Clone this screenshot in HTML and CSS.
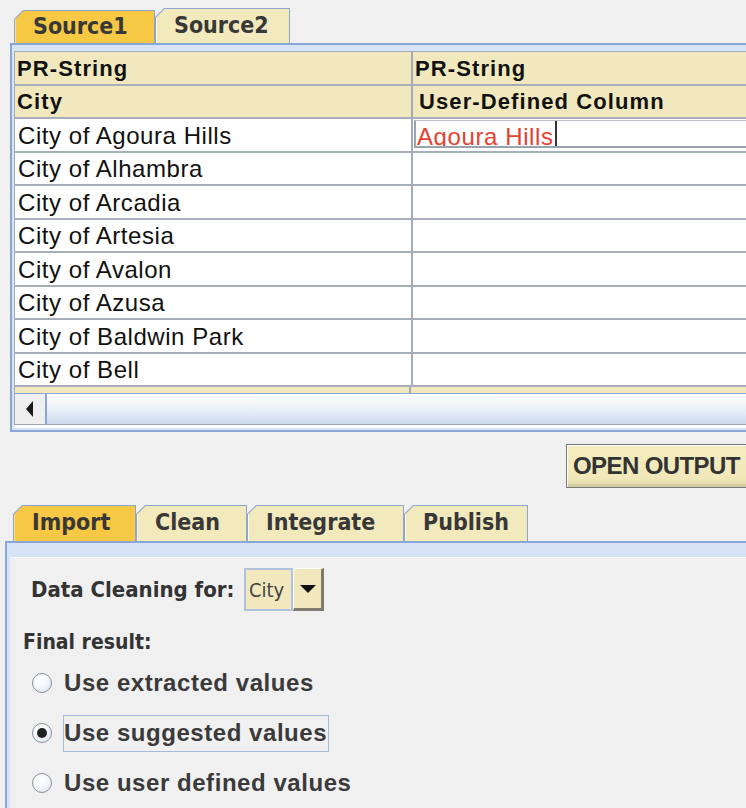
FILE: index.html
```html
<!DOCTYPE html>
<html>
<head>
<meta charset="utf-8">
<link rel="stylesheet" href="styles.css">
</head>
<body>
<div class="top-tabs">
  <div class="tab tab-sel w-src1"><span class="tab-in">Source1</span></div>
  <div class="tab w-src2"><span class="tab-in">Source2</span></div>
</div>
<div class="panel1">
  <div class="grid">
    <div class="hcell">PR-String</div><div class="hcell hcell2">PR-String</div>
    <div class="hcell">City</div><div class="hcell hcell2 indent">User-Defined Column</div>
    <div class="cell">City of Agoura Hills</div><div class="cell cell2 editing"><span class="editor"><span class="edit-text">Agoura Hills</span><span class="caret"></span></span></div>
    <div class="cell">City of Alhambra</div><div class="cell cell2"></div>
    <div class="cell">City of Arcadia</div><div class="cell cell2"></div>
    <div class="cell">City of Artesia</div><div class="cell cell2"></div>
    <div class="cell">City of Avalon</div><div class="cell cell2"></div>
    <div class="cell">City of Azusa</div><div class="cell cell2"></div>
    <div class="cell">City of Baldwin Park</div><div class="cell cell2"></div>
    <div class="cell">City of Bell</div><div class="cell cell2"></div>
  </div>
  <div class="filler"><span class="filler-a"></span><span class="filler-b"></span></div>
  <div class="hscroll">
    <div class="sbtn"><svg width="10" height="16" viewBox="0 0 10 16"><polygon points="8,0 8,16 1,8" fill="#1a1a1a"/></svg></div>
    <div class="track"></div>
  </div>
</div>
<div class="btn-row"><div class="open-btn">OPEN OUTPUT</div></div>
<div class="bottom-tabs">
  <div class="tab tab-sel w-import"><span class="tab-in">Import</span></div>
  <div class="tab w-clean"><span class="tab-in">Clean</span></div>
  <div class="tab w-integrate"><span class="tab-in">Integrate</span></div>
  <div class="tab w-publish"><span class="tab-in">Publish</span></div>
</div>
<div class="panel2">
  <div class="panel2-in">
    <div class="clean-row">
      <span class="lbl">Data Cleaning for:</span>
      <div class="combo">
        <span class="combo-val">City</span>
        <span class="combo-arrow"><svg width="16" height="10" viewBox="0 0 16 10"><polygon points="0,1 16,1 8,9" fill="#111"/></svg></span>
      </div>
    </div>
    <div class="final">Final result:</div>
    <div class="radios">
      <div class="radio-row"><span class="radio"></span><span class="rlabel">Use extracted values</span></div>
      <div class="radio-row"><span class="radio on"><span class="dot"></span></span><span class="rlabel focus">Use suggested values</span></div>
      <div class="radio-row"><span class="radio"></span><span class="rlabel">Use user defined values</span></div>
    </div>
  </div>
</div>
</body>
</html>
```
FILE: styles.css
```css
html, body {
  margin: 0;
  padding: 0;
}
body {
  width: 746px;
  height: 808px;
  overflow: hidden;
  background: #f0f0f0;
  font-family: "Liberation Sans", Arial, sans-serif;
}

/* ---------- tabs ---------- */
.top-tabs {
  display: flex;
  align-items: flex-end;
  height: 43px;
  padding-left: 14px;
  box-sizing: border-box;
}
.tab {
  background: #8ea6cf;
  padding: 1px 1px 0 1px;
  box-sizing: border-box;
  clip-path: polygon(9px 0, 100% 0, 100% 100%, 0 100%, 0 9px);
}
.tab-in {
  display: flex;
  align-items: center;
  height: 100%;
  box-sizing: border-box;
  padding-left: 17px;
  padding-bottom: 3px;
  background: #f2eabc;
  border-left: 1px solid #fbf8e8;
  clip-path: polygon(8.5px 0, 100% 0, 100% 100%, 0 100%, 0 8.5px);
  font-family: "DejaVu Sans Condensed", "DejaVu Sans", sans-serif;
  font-stretch: condensed;
  font-weight: bold;
  font-size: 23px;
  color: #383838;
  white-space: nowrap;
}
.tab-sel .tab-in {
  background: #f6c843;
  border-left-color: #fadf8c;
}
.w-src1 { width: 141px; height: 33px; }
.w-src2 { width: 135px; height: 35px; }

/* ---------- top panel ---------- */
.panel1 {
  margin-left: 10px;
  border-top: 2px solid #8aa6d6;
  border-left: 2px solid #8aa6d6;
  border-bottom: 2px solid #8aa6d6;
  background: #d6e4f5;
  padding: 6px 0 2px 2px;
}
.grid {
  display: grid;
  grid-template-columns: 396px 1fr;
  grid-auto-rows: 33.5px;
  border-top: 1px solid #a2abb7;
  border-left: 1px solid #a2abb7;
  background: #fff;
}
.hcell, .cell {
  box-sizing: border-box;
  border-bottom: 2px solid #a6aeba;
  display: flex;
  align-items: center;
  white-space: nowrap;
  overflow: hidden;
  color: #111;
}
.hcell {
  background: #f1e9bd;
  font-weight: bold;
  font-size: 22px;
  letter-spacing: 1.1px;
  padding-left: 2px;
  padding-top: 2px;
}
.hcell2, .cell2 {
  border-left: 2px solid #a2abb7;
}
.hcell.indent { padding-left: 6px; }
.cell {
  background: #fff;
  font-size: 24px;
  letter-spacing: 0.55px;
  padding-left: 3px;
  padding-top: 2px;
}
.cell.editing {
  align-items: flex-start;
  padding: 1px 0 0 1px;
}
.editor {
  display: flex;
  align-items: flex-start;
  box-sizing: border-box;
  width: 100%;
  height: 28px;
  overflow: hidden;
  border-top: 1px solid #b9c0c9;
  border-left: 2px solid #9aa3ad;
  border-bottom: 2px solid #9aa3ad;
  background: #fff;
}
.edit-text {
  color: #e8402f;
  font-size: 24px;
  line-height: 30px;
  letter-spacing: 0.6px;
  padding-left: 1px;
  margin-top: 1px;
}
.caret {
  width: 2px;
  height: 25px;
  margin-left: 1px;
  background: #333;
}
.filler {
  display: grid;
  grid-template-columns: 396px 1fr;
  height: 6px;
  background: #f1e9bd;
  border-left: 1px solid #a2abb7;
}
.filler-a { border-right: 2px solid #a2abb7; }
.hscroll {
  display: flex;
  height: 30px;
  border-top: 1px solid #8aa6d6;
  border-bottom: 1px solid #9aa3ad;
  border-left: 1px solid #a2abb7;
  box-shadow: 0 3px 0 #fbfcfe;
  margin-bottom: 3px;
}
.sbtn {
  width: 32px;
  background: #efefef;
  border-right: 2px solid #8aa6d6;
  display: flex;
  align-items: center;
  padding-left: 10px;
  box-sizing: border-box;
}
.track {
  flex: 1;
  background: linear-gradient(#ffffff 0%, #f2f6fb 35%, #dfe8f4 70%, #cddbee 100%);
}

/* ---------- button ---------- */
.btn-row {
  display: flex;
  padding: 12px 0 0 566px;
  height: 44px;
}
.open-btn {
  flex: 0 0 200px;
  box-sizing: border-box;
  height: 44px;
  border: 1px solid #777;
  border-right: none;
  box-shadow: inset 1px 1px 0 #fff, inset 0 -3px 0 #d3cc9f;
  background: linear-gradient(#f3ecbf 0%, #f0e8b8 80%, #ddd5a4 100%);
  font-weight: bold;
  font-size: 24px;
  letter-spacing: -0.6px;
  color: #333;
  padding: 7px 0 0 6px;
  white-space: nowrap;
}

/* ---------- bottom tabs ---------- */
.bottom-tabs {
  display: flex;
  align-items: flex-end;
  padding: 17px 0 0 13px;
  height: 53px;
  box-sizing: border-box;
}
.bottom-tabs .tab { height: 36px; }
.w-import { width: 123px; }
.w-clean { width: 111px; }
.w-integrate { width: 157px; }
.w-publish { width: 124px; }
.w-clean .tab-in, .w-integrate .tab-in, .w-publish .tab-in { padding-left: 17px; }

/* ---------- bottom panel ---------- */
.panel2 {
  margin-left: 5px;
  border-top: 2px solid #8aa6d6;
  border-left: 2px solid #8aa6d6;
  background: #d6e4f5;
  padding: 6px 0 0 2px;
  height: 280px;
  overflow: hidden;
}
.panel2-in {
  background: #f0f0f0;
  border-top: 1px solid #fafafa;
  height: 100%;
  padding: 10px 0 0 0;
  margin-top: 8px;
  margin-left: 1px;
  font-family: "DejaVu Sans Condensed", "DejaVu Sans", sans-serif;
  font-stretch: condensed;
  color: #333;
}
.clean-row {
  display: flex;
  align-items: center;
  height: 43px;
  padding-left: 21px;
}
.lbl {
  font-weight: bold;
  font-size: 22px;
  width: 213px;
  white-space: nowrap;
}
.combo {
  display: flex;
  height: 43px;
}
.combo-val {
  display: flex;
  align-items: center;
  box-sizing: border-box;
  width: 49px;
  border: 2px solid #b2c2dc;
  background: #f1e9bd;
  font-size: 20px;
  color: #444;
  padding-left: 3px;
}
.combo-arrow {
  display: flex;
  align-items: center;
  justify-content: center;
  box-sizing: border-box;
  width: 31px;
  background: #f1e9bd;
  border-top: 1px solid #fff;
  border-left: 1px solid #fff;
  border-right: 3px solid #7d7b6e;
  border-bottom: 3px solid #7d7b6e;
}
.final {
  font-weight: bold;
  font-size: 21px;
  padding: 19px 0 0 13px;
  height: 26px;
  white-space: nowrap;
}
.radios {
  display: flex;
  flex-direction: column;
  gap: 12px;
  padding: 8px 0 0 22px;
}
.radio-row {
  display: flex;
  align-items: center;
  height: 38px;
  gap: 11px;
}
.radio {
  display: flex;
  align-items: center;
  justify-content: center;
  width: 20px;
  height: 20px;
  box-sizing: border-box;
  border-radius: 50%;
  border: 1px solid #8a9098;
  background: radial-gradient(circle at 40% 35%, #ffffff 0%, #f4f7fb 45%, #d3dfee 100%);
}
.dot {
  width: 10px;
  height: 10px;
  border-radius: 50%;
  background: #222;
}
.rlabel {
  font-family: "Liberation Sans", Arial, sans-serif;
  font-weight: bold;
  font-size: 24px;
  letter-spacing: 0.55px;
  color: #3a3a3a;
  white-space: nowrap;
  border: 1px solid transparent;
  padding: 3px 1px 4px 0;
}
.rlabel.focus {
  border-color: #a6badb;
}
```
